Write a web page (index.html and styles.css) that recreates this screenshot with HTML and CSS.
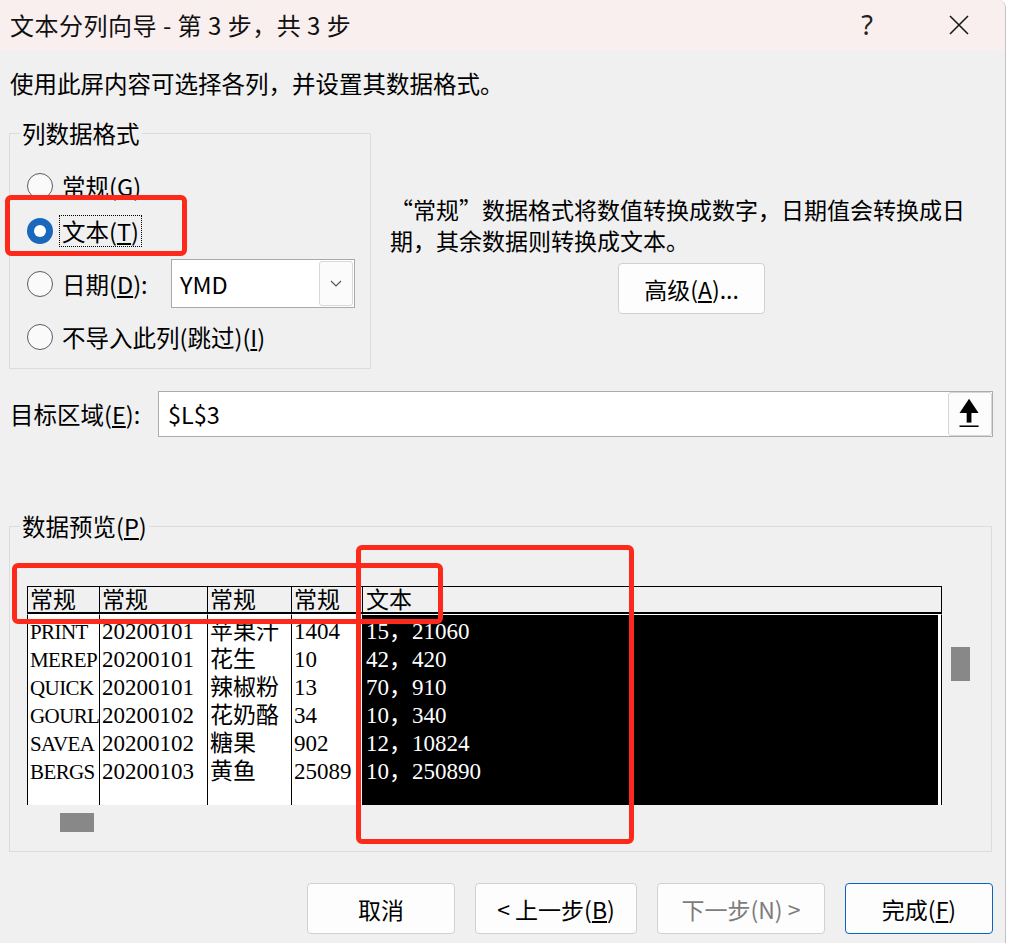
FILE: index.html
```html
<!DOCTYPE html>
<html lang="zh-CN">
<head>
<meta charset="utf-8">
<title>文本分列向导 - 第 3 步，共 3 步</title>
<link rel="stylesheet" href="styles.css">
</head>
<body>
<div class="window">
  <header class="titlebar">
    <span class="title">文本分列向导 - 第 3 步，共 3 步</span>
    <span class="help">?</span>
    <svg class="close" viewBox="0 0 20 20" width="20" height="20" aria-hidden="true"><path d="M1 1L19 19M19 1L1 19"/></svg>
  </header>

  <main class="content">
    <p class="intro">使用此屏内容可选择各列，并设置其数据格式。</p>

    <div class="top-row">
      <fieldset class="group format-group">
        <legend>列数据格式</legend>
        <div class="radio-row"><span class="radio"></span><span class="rlabel">常规(<u>G</u>)</span></div>
        <div class="radio-row"><span class="radio checked"></span><span class="rlabel focus">文本(<u>T</u>)</span></div>
        <div class="radio-row date-row">
          <span class="radio"></span><span class="rlabel">日期(<u>D</u>):</span>
          <div class="select">
            <span class="select-value">YMD</span>
            <span class="select-btn"><svg viewBox="0 0 12 7" width="12" height="7" aria-hidden="true"><path d="M1 1L6 6L11 1"/></svg></span>
          </div>
        </div>
        <div class="radio-row skip-row"><span class="radio"></span><span class="rlabel">不导入此列(跳过)(<u>I</u>)</span></div>
      </fieldset>

      <div class="desc-col">
        <p class="desc">“常规”数据格式将数值转换成数字，日期值会转换成日<br>期，其余数据则转换成文本。</p>
        <button class="btn adv-btn">高级(<u>A</u>)...</button>
      </div>
    </div>

    <div class="target-row">
      <span class="target-label">目标区域(<u>E</u>):</span>
      <div class="target-input">
        <span class="target-value">$L$3</span>
        <span class="collapse-btn">
          <svg viewBox="0 0 44 44" width="44" height="44" aria-hidden="true">
            <polygon points="21,6 11,21 31,21"/>
            <rect x="18.5" y="20" width="5" height="11"/>
            <rect x="11" y="34" width="20" height="1.6"/>
          </svg>
        </span>
      </div>
    </div>

    <fieldset class="group preview-group">
      <legend>数据预览(<u>P</u>)</legend>
      <div class="preview-pane">
        <table class="preview">
          <thead>
            <tr><th class="c1">常规</th><th class="c2">常规</th><th class="c3">常规</th><th class="c4">常规</th><th class="c5">文本</th></tr>
          </thead>
          <tbody>
            <tr class="first"><td class="c1">PRINT</td><td class="c2">20200101</td><td class="c3">苹果汁</td><td class="c4">1404</td><td class="c5">15，21060</td></tr>
            <tr><td class="c1">MEREP</td><td class="c2">20200101</td><td class="c3">花生</td><td class="c4">10</td><td class="c5">42，420</td></tr>
            <tr><td class="c1">QUICK</td><td class="c2">20200101</td><td class="c3">辣椒粉</td><td class="c4">13</td><td class="c5">70，910</td></tr>
            <tr><td class="c1">GOURL</td><td class="c2">20200102</td><td class="c3">花奶酪</td><td class="c4">34</td><td class="c5">10，340</td></tr>
            <tr><td class="c1">SAVEA</td><td class="c2">20200102</td><td class="c3">糖果</td><td class="c4">902</td><td class="c5">12，10824</td></tr>
            <tr><td class="c1">BERGS</td><td class="c2">20200103</td><td class="c3">黄鱼</td><td class="c4">25089</td><td class="c5">10，250890</td></tr>
            <tr class="filler"><td class="c1"></td><td class="c2"></td><td class="c3"></td><td class="c4"></td><td class="c5"></td></tr>
          </tbody>
        </table>
        <div class="vscroll"><span class="vthumb"></span></div>
      </div>
      <div class="hscroll"><span class="hthumb"></span></div>
    </fieldset>

    <div class="buttons">
      <button class="btn btn-cancel">取消</button>
      <button class="btn btn-back">&lt; 上一步(<u>B</u>)</button>
      <button class="btn btn-next" disabled>下一步(N) &gt;</button>
      <button class="btn btn-finish">完成(<u>F</u>)</button>
    </div>
  </main>

  <div class="mark mark-radio"></div>
  <div class="mark mark-header"></div>
  <div class="mark mark-column"></div>
</div>
</body>
</html>
```

FILE: styles.css
```css
* { box-sizing: border-box; }

html, body {
  margin: 0;
  padding: 0;
  background: #ffffff;
}

body {
  font-family: "Noto Sans CJK SC", "Noto Sans", sans-serif;
  font-size: 23.5px;
  color: #000;
}

.window {
  position: relative;
  width: 1006px;
  height: 943px;
  overflow: hidden;
  background: #f0f0f0;
  border-right: 1px solid #c2c2c2;
  border-top-right-radius: 8px;
}

/* title bar */
.titlebar {
  display: flex;
  align-items: center;
  height: 50px;
  padding-left: 10px;
  background: #f9efef;
}
.title {
  font-size: 24px;
  letter-spacing: 0.5px;
  line-height: 30px;
  color: #111;
}
.help {
  margin-left: auto;
  width: 30px;
  text-align: center;
  font-family: "Noto Sans", sans-serif;
  font-size: 27px;
  line-height: 30px;
  color: #222;
}
.close {
  margin-left: 67px;
  margin-right: 36px;
  fill: none;
  stroke: #1a1a1a;
  stroke-width: 1.6;
}

/* content */
.content {
  padding: 0 12px 0 9px;
}
.intro {
  margin: 17px 0 0 1px;
  line-height: 32px;
}

.top-row {
  display: flex;
  align-items: flex-start;
  margin-top: 19px;
}

.group {
  margin: 0;
  border: 1px solid #dcdcdc;
  min-inline-size: auto;
}
.group legend {
  margin-left: -7px;
  padding: 0 2px;
  line-height: 30px;
  font-size: 23.5px;
}

.format-group {
  width: 362px;
  padding: 15px 15px 9px 17px;
}

.radio-row {
  display: flex;
  align-items: center;
  height: 45px;
}
.date-row {
  height: 49px;
  margin-top: 6px;
}
.skip-row {
  margin-top: 6px;
}
.radio {
  flex: none;
  position: relative;
  width: 26px;
  height: 26px;
  border-radius: 50%;
  border: 1.5px solid #5c5c5c;
  background: #fafafa;
}
.radio.checked {
  border: none;
  background: #1a68be;
}
.radio.checked::after {
  content: "";
  position: absolute;
  left: 7px;
  top: 7px;
  width: 12px;
  height: 12px;
  border-radius: 50%;
  background: #ffffff;
}
.rlabel {
  margin-left: 7px;
  padding: 0 2px;
  line-height: 30px;
  white-space: nowrap;
}
.rlabel.focus {
  outline: 1px dotted #000;
}

.select {
  margin-left: auto;
  display: flex;
  align-items: center;
  width: 184px;
  height: 49px;
  padding-left: 8px;
  border: 1px solid #a9a9a9;
  background: #ffffff;
}
.select-value {
  line-height: 30px;
}
.select-btn {
  margin-left: auto;
  margin-right: 1px;
  display: flex;
  align-items: center;
  justify-content: center;
  width: 34px;
  height: 45px;
  border: 1px solid #d8d8d8;
  border-radius: 3px;
  background: #fbfbfb;
}
.select-btn svg {
  fill: none;
  stroke: #555;
  stroke-width: 1.2;
}

.desc-col {
  margin-left: 19px;
  padding-top: 76px;
}
.desc {
  margin: 0;
  font-size: 23px;
  line-height: 31px;
  white-space: nowrap;
}

.btn {
  display: flex;
  align-items: center;
  justify-content: center;
  height: 51px;
  padding: 0;
  border: 1px solid #d1d1d1;
  border-radius: 4px;
  background: #fdfdfd;
  font-family: inherit;
  font-size: 23px;
  color: #000;
}
.adv-btn {
  width: 147px;
  margin: 7px 0 0 228px;
}

/* target */
.target-row {
  display: flex;
  align-items: center;
  margin-top: 22px;
}
.target-label {
  flex: 0 0 149px;
  padding-left: 1px;
  line-height: 30px;
  white-space: nowrap;
}
.target-input {
  flex: 1;
  display: flex;
  align-items: center;
  height: 46px;
  padding-left: 9px;
  border: 1px solid #acacac;
  background: #ffffff;
}
.target-value {
  line-height: 30px;
}
.collapse-btn {
  margin-left: auto;
  width: 44px;
  height: 44px;
  border: 1px solid #d6d6d6;
  border-radius: 3px;
  background: #fcfcfc;
}
.collapse-btn svg {
  display: block;
  width: 42px;
  height: 42px;
  fill: #000;
}

/* preview */
.preview-group {
  width: 983px;
  margin-top: 74px;
  padding: 45px 21px 19px 17px;
}
.preview-pane {
  display: flex;
  align-items: flex-start;
}
.preview {
  width: 915px;
  border-collapse: separate;
  border-spacing: 0;
  table-layout: fixed;
  font-family: "Liberation Serif", "Noto Sans CJK SC", serif;
  font-size: 23px;
}
.preview th,
.preview td {
  padding: 0 0 0 2px;
  border-left: 1px solid #000;
  white-space: nowrap;
  overflow: hidden;
  text-align: left;
  font-weight: normal;
}
.preview .c1 { width: 72px; }
.preview td.c1 { font-size: 21px; letter-spacing: -0.6px; }
.preview .c2 { width: 108px; }
.preview .c3 { width: 84px; }
.preview .c4 { width: 71px; }
.preview .c5 { width: 580px; border-right: 1px solid #000; padding-left: 3px; }

.preview th {
  height: 28px;
  padding-top: 2px;
  line-height: 23px;
  border-top: 1px solid #000;
  border-bottom: 2px solid #000;
  background: #f0f0f0;
  color: #000;
}
.preview td {
  height: 28px;
  line-height: 28px;
  background: #ffffff;
}
.preview tr.first td {
  height: 32px;
  padding-top: 3px;
  border-top: 1px solid #fff;
}
.preview tr.filler td {
  height: 19px;
}
.preview td.c5 {
  background: #000;
  color: #fff;
  box-shadow: inset -3px 0 0 #fff;
}

.vscroll {
  margin-left: 9px;
  padding-top: 61px;
}
.vthumb {
  display: block;
  width: 19px;
  height: 34px;
  background: #888888;
}
.hscroll {
  margin-top: 8px;
  padding-left: 33px;
}
.hthumb {
  display: block;
  width: 34px;
  height: 19px;
  background: #888888;
}

/* buttons */
.buttons {
  display: flex;
  justify-content: flex-end;
  gap: 20px;
  margin-top: 31px;
}
.btn-cancel { width: 148px; }
.btn-back { width: 162px; }
.btn-next { width: 168px; color: #7c7c7c; }
.btn-finish { width: 148px; border-color: #0a63c0; }

/* red annotation marks drawn over the screenshot */
.mark {
  position: absolute;
  border: 5px solid #fd2a1c;
  border-radius: 6px;
  pointer-events: none;
}
.mark-radio { left: 5px; top: 195px; width: 182px; height: 61px; }
.mark-header { left: 12px; top: 563px; width: 431px; height: 61px; }
.mark-column { left: 356px; top: 545px; width: 278px; height: 299px; }
```
